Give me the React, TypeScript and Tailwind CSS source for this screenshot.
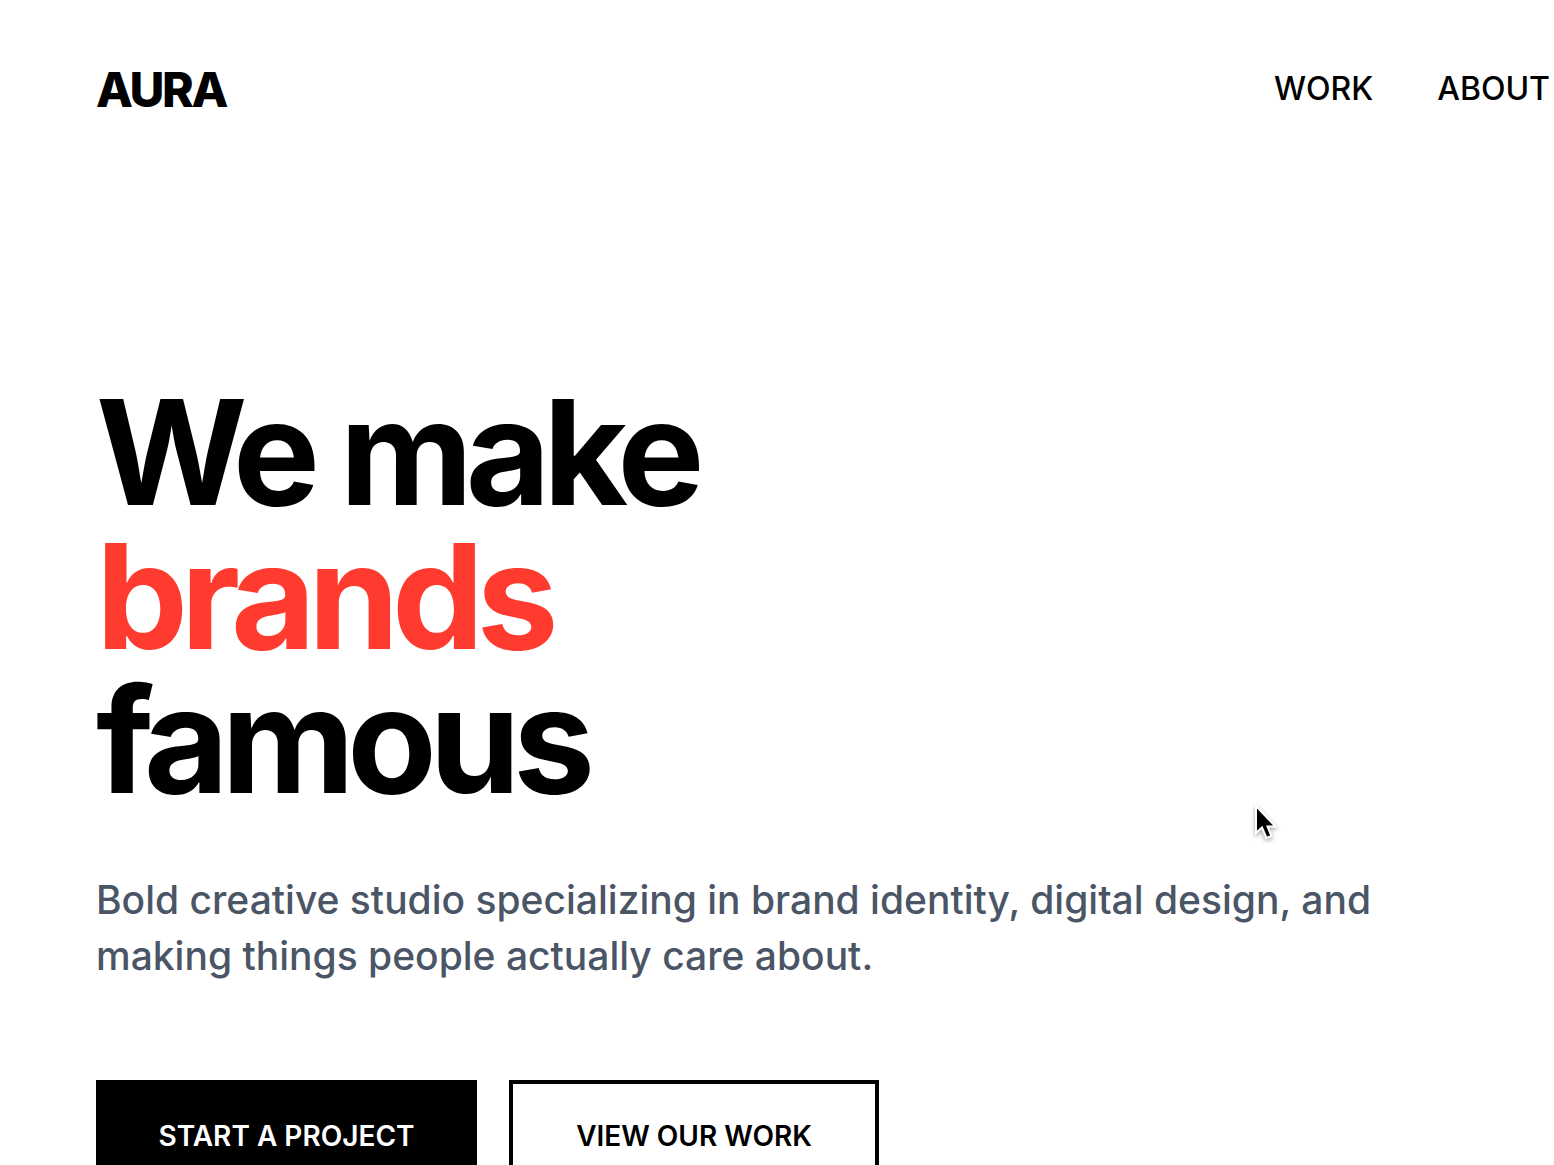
import type { ReactNode } from "react";

interface NavItem {
  label: string;
  href: string;
}

const navItems: NavItem[] = [
  { label: "WORK", href: "#work" },
  { label: "ABOUT", href: "#about" },
];

function NavLink({ href, children }: { href: string; children: ReactNode }) {
  return (
    <a href={href} className="text-[32px] leading-[50px] font-medium">
      {children}
    </a>
  );
}

function Cursor() {
  return (
    <svg
      className="pointer-events-none absolute top-[802px] left-[1252px] h-10 w-7 drop-shadow-[0_2px_2px_rgba(0,0,0,0.35)]"
      viewBox="0 0 28 40"
      aria-hidden="true"
    >
      <path
        d="M4 4V31L10 25.500L14.500 36L19.500 34L15.500 24.500H23.500Z"
        fill="#000"
        stroke="#fff"
        strokeWidth="2"
      />
    </svg>
  );
}

export default function App() {
  return (
    <div className="relative h-screen overflow-hidden bg-white font-['Inter',sans-serif] text-black">
      <header className="flex items-start justify-between pt-16 pr-1 pl-24">
        <a href="#top" className="text-5xl leading-13 font-extrabold tracking-tighter">
          AURA
        </a>
        <nav className="flex gap-16">
          {navItems.map((item) => (
            <NavLink key={item.label} href={item.href}>
              {item.label}
            </NavLink>
          ))}
        </nav>
      </header>

      {/* Hero */}
      <main className="px-24 pt-66">
        <h1 className="text-[146px] leading-36 font-bold tracking-tighter">
          We make
          <span className="block text-[#ff3b30]">brands</span>
          famous
        </h1>
        <p className="mt-15 max-w-[1344px] text-[39px] leading-14 font-medium text-gray-600">
          Bold creative studio specializing in brand identity, digital design, and making things people actually care about.
        </p>
        <div className="mt-24 flex gap-8">
          <button
            type="button"
            className="min-w-[381px] border-4 border-black bg-black px-14 py-7 text-[28px] leading-12 font-semibold text-white"
          >
            START A PROJECT
          </button>
          <button
            type="button"
            className="min-w-[370px] border-4 border-black bg-white px-14 py-7 text-[28px] leading-12 font-semibold"
          >
            VIEW OUR WORK
          </button>
        </div>
      </main>

      <Cursor />
    </div>
  );
}
